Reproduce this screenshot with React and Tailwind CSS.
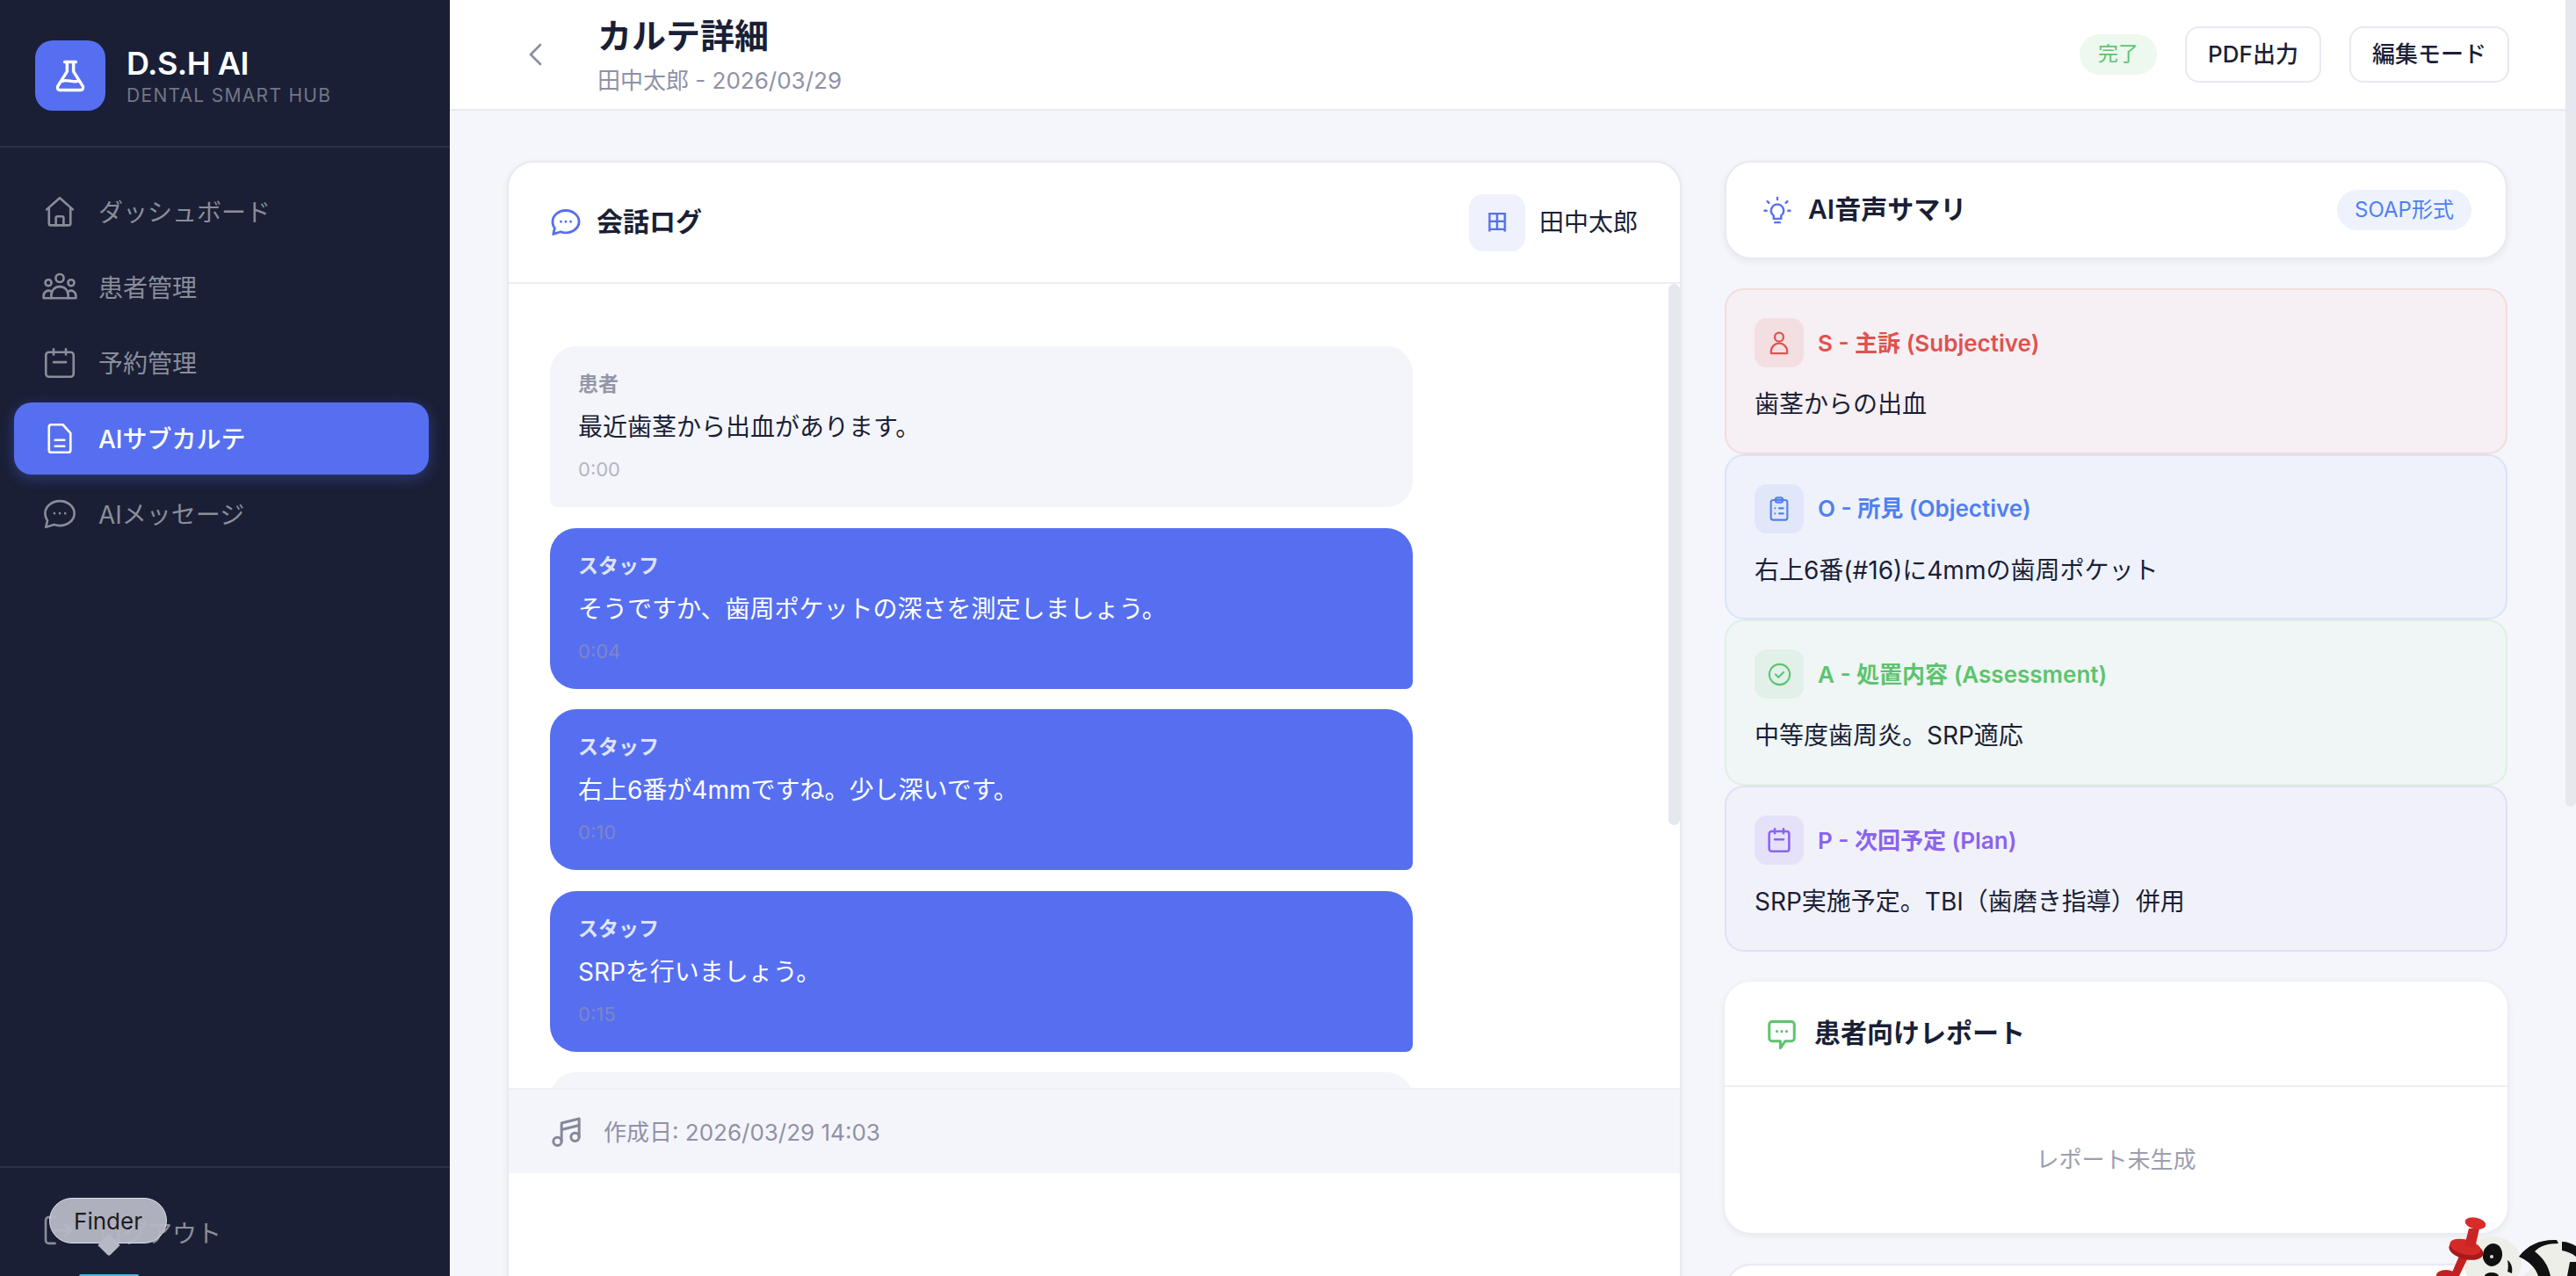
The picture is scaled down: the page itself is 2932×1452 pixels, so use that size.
import React from "react";

const Ico = ({ className = "", sw = 1.5, children }) => (
  <svg
    viewBox="0 0 24 24"
    fill="none"
    stroke="currentColor"
    strokeWidth={sw}
    strokeLinecap="round"
    strokeLinejoin="round"
    className={className}
  >
    {children}
  </svg>
);

const HomeIcon = (p) => (
  <Ico {...p}>
    <path d="M3.500 10.500 12 3l8.500 7.500" />
    <path d="M5 9.500V19.500a1.300 1.300 0 0 0 1.300 1.300h11.400a1.300 1.300 0 0 0 1.300-1.300V9.500" />
    <path d="M9.500 20.800v-4.800a1 1 0 0 1 1-1h3a1 1 0 0 1 1 1v4.800" />
  </Ico>
);
const TeamIcon = (p) => (
  <Ico {...p}>
    <circle cx="12" cy="6" r="2.600" />
    <circle cx="4.600" cy="9" r="2" />
    <circle cx="19.400" cy="9" r="2" />
    <path d="M6.500 19v-2a5.500 5.500 0 0 1 11 0v2z" />
    <path d="M6.500 19H1.500v-1.500a3.300 3.300 0 0 1 4.800-3" />
    <path d="M17.500 19h5v-1.500a3.300 3.300 0 0 0-4.800-3" />
  </Ico>
);
const CalIcon = (p) => (
  <Ico {...p}>
    <rect x="3" y="5" width="18" height="16" rx="2" />
    <path d="M8 3v3.500M16 3v3.500M8 11.500h8" />
  </Ico>
);
const FileIcon = (p) => (
  <Ico {...p}>
    <path d="M6.500 3h7.500l5 5.500V19.500a1.500 1.500 0 0 1-1.500 1.500h-11A1.500 1.500 0 0 1 5 19.500v-15A1.500 1.500 0 0 1 6.500 3z" />
    <path d="M9 13h6M9 17h6" />
  </Ico>
);
const ChatIcon = (p) => (
  <Ico {...p}>
    <path d="M12 3.500c5.200 0 9.500 3.600 9.500 8s-4.300 8-9.500 8c-1.400 0-2.500-.2-3.700-.7L3 20.500l1-4.300c-1-1.300-1.500-2.900-1.500-4.700 0-4.400 4.300-8 9.500-8z" />
    <path d="M8.500 11.500h.01M12 11.500h.01M15.500 11.500h.01" />
  </Ico>
);
const LogoutIcon = (p) => (
  <Ico {...p}>
    <path d="M10 3.500H6a2 2 0 0 0-2 2v13a2 2 0 0 0 2 2h4" />
    <path d="M10 12h10M16.500 8l4 4-4 4" />
  </Ico>
);

const navItems = [
  { label: "ダッシュボード", Icon: HomeIcon },
  { label: "患者管理", Icon: TeamIcon },
  { label: "予約管理", Icon: CalIcon },
  { label: "AIサブカルテ", Icon: FileIcon, active: true },
  { label: "AIメッセージ", Icon: ChatIcon },
];

const messages = [
  { who: "患者", text: "最近歯茎から出血があります。", time: "0:00" },
  { who: "スタッフ", text: "そうですか、歯周ポケットの深さを測定しましょう。", time: "0:04", staff: true },
  { who: "スタッフ", text: "右上6番が4mmですね。少し深いです。", time: "0:10", staff: true },
  { who: "スタッフ", text: "SRPを行いましょう。", time: "0:15", staff: true },
];

const soap = [
  {
    title: "S - 主訴 (Subjective)",
    body: "歯茎からの出血",
    box: "bg-[#f6eff3] border-[#f3dcdd]",
    chip: "bg-[#f3dfe2]",
    tint: "text-[#e0524f]",
    icon: (
      <Ico className="h-[34px] w-[34px]" sw={1.6}>
        <circle cx="12" cy="7.500" r="3.500" />
        <path d="M5.500 20.500v-1.500a5.500 5.500 0 0 1 13 0v1.500z" />
      </Ico>
    ),
  },
  {
    title: "O - 所見 (Objective)",
    body: "右上6番(#16)に4mmの歯周ポケット",
    box: "bg-[#eff2fb] border-[#d9e3f8]",
    chip: "bg-[#e1e7f8]",
    tint: "text-[#4f80f0]",
    icon: (
      <Ico className="h-[32px] w-[32px]" sw={1.6}>
        <rect x="5" y="4.500" width="14" height="17" rx="2" />
        <rect x="9" y="2.500" width="6" height="4" rx="1.500" />
        <path d="M8.500 11.500h.01M8.500 16h.01M12 11.500h3.500M12 16h3.500" />
      </Ico>
    ),
  },
  {
    title: "A - 処置内容 (Assessment)",
    body: "中等度歯周炎。SRP適応",
    box: "bg-[#f0f6f5] border-[#dcf0e2]",
    chip: "bg-[#e1f0e8]",
    tint: "text-[#5cc46e]",
    icon: (
      <Ico className="h-[31px] w-[31px]" sw={1.6}>
        <circle cx="12" cy="12" r="9" />
        <path d="m8.500 12 2.500 2.500 4.500-4.500" />
      </Ico>
    ),
  },
  {
    title: "P - 次回予定 (Plan)",
    body: "SRP実施予定。TBI（歯磨き指導）併用",
    box: "bg-[#f1f1fa] border-[#e1dff6]",
    chip: "bg-[#e5e1f9]",
    tint: "text-[#8b63ee]",
    icon: (
      <Ico className="h-[34px] w-[34px]" sw={1.8}>
        <rect x="4" y="5" width="16" height="16" rx="2" />
        <path d="M8.500 3v3.500M15.500 3v3.500M8.500 11.500h7" />
      </Ico>
    ),
  },
];

// the pinned panda poking in at the corner of the desktop
const PandaSticker = () => (
  <svg viewBox="0 0 192 112" className="absolute bottom-0 right-0 h-[112px] w-[192px]">
    <ellipse cx="97" cy="97" rx="33" ry="30" fill="#eeeee8" />
    <ellipse cx="97" cy="88" rx="11" ry="13" fill="#111" transform="rotate(12 97 88)" />
    <circle cx="96" cy="90" r="2" fill="#ddd" />
    <path d="M114 94c5 3 6 10 5 15l-5-2c1-4 1-8 0-13z" fill="#111" />
    <ellipse cx="96" cy="112" rx="8" ry="4" fill="#111" />
    <path d="M128 92c8-14 25-22 41-21 9 0 16 2 23 5v36h-60c7-7 13-12 18-15-6-4-14-5-22-5z" fill="#eeeee8" />
    <path d="M127 90c10-14 26-20 43-19l2 4c-13 0-21 3-27 9 10 8 15 15 18 28h-14c-3-9-9-16-22-22z" fill="#111" />
    <path d="M176 73c6 0 11 2 16 5v12c-5-4-10-6-16-7z" fill="#111" />
    <path d="M185 96h7v16h-10z" fill="#111" />
    <path d="M61 85 49 112h10l12-25z" fill="#c4201f" />
    <ellipse cx="44" cy="111" rx="11" ry="6" fill="#c4201f" />
    <ellipse cx="67" cy="83" rx="20" ry="10" fill="#a91a1a" transform="rotate(14 67 83)" />
    <ellipse cx="66" cy="79" rx="18" ry="8.500" fill="#d32a28" transform="rotate(14 66 79)" />
    <path d="M70 58h12l-5 22-12-2z" fill="#c92523" />
    <ellipse cx="77.500" cy="52" rx="12" ry="6.500" fill="#d92c2a" transform="rotate(12 77.500 52)" />
  </svg>
);

const App = () => {
  return (
    <div className="relative flex h-[1452px] w-full overflow-hidden bg-[#f4f6fb] text-[#1a1f36] [font-family:Inter,'Noto_Sans_CJK_JP',sans-serif]">
      {/* Sidebar */}
      <aside className="flex w-[512px] shrink-0 flex-col bg-[#1a1f36]">
        <div className="flex h-[168px] items-start gap-[24px] border-b-2 border-[#2b3046] pl-[40px] pt-[46px]">
          <div className="flex h-[80px] w-[80px] items-center justify-center rounded-[20px] bg-[#566ff0] text-white">
            <svg viewBox="0 0 24 24" fill="none" stroke="currentColor" strokeWidth="1.900" strokeLinejoin="round" strokeLinecap="round" className="h-[44px] w-[44px]">
              <path d="M8.500 3.500h7M10 3.500v6L4.300 18.500c-.7 1.200 0 2.500 1.400 2.500h12.600c1.400 0 2.100-1.300 1.400-2.500L14 9.500v-6" />
              <path d="M7 15.500c3-1.500 6 1 10 0" />
            </svg>
          </div>
          <div className="pt-[4px]">
            <div className="text-[36px] leading-[44px] font-semibold tracking-[-0.5px] text-white">D.S.H AI</div>
            <div className="mt-[2px] text-[21px] leading-[26px] tracking-[1.300px] text-[#737684]">DENTAL SMART HUB</div>
          </div>
        </div>

        <nav className="flex flex-1 flex-col gap-[4px] pl-[16px] pr-[24px] pt-[32px]">
          {navItems.map(({ label, Icon, active }) => (
            <div
              key={label}
              className={`flex h-[82px] items-center gap-[23px] rounded-[20px] pl-[31px] text-[28px] ${
                active ? "bg-[#566ff0] font-medium text-white shadow-[0_4px_16px_rgba(86,111,240,0.35)]" : "text-[#8a8d99]"
              }`}
            >
              <Icon className="h-[42px] w-[42px]" />
              <span className="pt-[2px]">{label}</span>
            </div>
          ))}
        </nav>

        <div className="flex h-[125px] items-start gap-[25px] border-t-2 border-[#2b3046] pl-[45px] pt-[50px] text-[28px] text-[#8a8d99]">
          <LogoutIcon className="h-[42px] w-[42px]" />
          <span className="pt-[4px] leading-[42px]">ログアウト</span>
        </div>
      </aside>

      {/* Main */}
      <main className="flex min-w-0 flex-1 flex-col">
        <header className="flex h-[126px] shrink-0 items-center justify-between border-b-2 border-[#e8e9f1] bg-white pl-[89px] pr-[64px]">
          <div className="flex items-center gap-[63px]">
            <svg viewBox="0 0 16 26" fill="none" stroke="#8a8ca0" strokeWidth="2.600" strokeLinecap="round" strokeLinejoin="round" className="h-[26px] w-[16px]">
              <path d="M14 2 3 13l11 11" />
            </svg>
            <div>
              <h1 className="text-[39px] leading-[48px] font-semibold">カルテ詳細</h1>
              <p className="mt-[11px] text-[26px] leading-[32px] text-[#8f91a6]">田中太郎 - 2026/03/29</p>
            </div>
          </div>
          <div className="flex items-center">
            <span className="mr-[32px] flex h-[46px] w-[88px] items-center justify-center rounded-full bg-[#edf8ee] pb-[2px] text-[23px] text-[#5cc46e]">完了</span>
            <button className="mr-[32px] h-[64px] w-[155px] rounded-[16px] border-2 border-[#e8e9f1] bg-white pb-[2px] text-[26px] font-medium">PDF出力</button>
            <button className="h-[64px] w-[182px] rounded-[16px] border-2 border-[#e8e9f1] bg-white pb-[2px] text-[26px] font-medium">編集モード</button>
          </div>
        </header>

        <div className="grid flex-1 grid-cols-[1337px_891px] gap-[49px] pl-[65px] pt-[57px]">
          {/* Conversation log */}
          <section className="flex flex-col rounded-t-[30px] border-x-2 border-t-2 border-[#e8e9f1] bg-white shadow-[0_2px_8px_rgba(26,31,54,0.05)]">
            <div className="flex h-[138px] shrink-0 items-center justify-between border-b-2 border-[#eeeff5] pl-[46px] pr-[48px]">
              <div className="flex items-center gap-[16px]">
                <ChatIcon className="h-[38px] w-[38px] text-[#566ff0]" sw={1.8} />
                <h2 className="pb-[1px] text-[30px] font-semibold">会話ログ</h2>
              </div>
              <div className="flex items-center gap-[16px]">
                <span className="flex h-[65px] w-[64px] items-center justify-center rounded-[16px] bg-[#eff1fd] text-[24px] font-medium text-[#566ff0]">田</span>
                <span className="text-[28px]">田中太郎</span>
              </div>
            </div>

            <div className="flex h-[915px] shrink-0 overflow-hidden">
              <div className="flex flex-1 flex-col gap-[23.500px] pl-[47px] pt-[71px]">
                {messages.map((m) => (
                  <div
                    key={m.time}
                    className={`w-[982px] shrink-0 pb-[30px] pl-[32px] pt-[29px] ${
                      m.staff ? "rounded-[30px] rounded-br-[8px] bg-[#566ff0] text-white" : "rounded-[30px] rounded-bl-[8px] bg-[#f4f5fa]"
                    }`}
                  >
                    <div className={`text-[23px] leading-[28px] font-semibold ${m.staff ? "text-[#dfe3fd]" : "text-[#9496a8]"}`}>{m.who}</div>
                    <div className="mt-[13px] text-[28px] leading-[44px]">{m.text}</div>
                    <div className={`mt-[13px] text-[22px] leading-[26px] ${m.staff ? "text-[#7f86c6]" : "text-[#b4b5c3]"}`}>{m.time}</div>
                  </div>
                ))}
                <div className="h-[183px] w-[982px] shrink-0 rounded-[30px] bg-[#f4f5fa]" />
              </div>
              <div className="w-[13px] shrink-0">
                <div className="h-[616px] rounded-full bg-[#e6e8f0]" />
              </div>
            </div>

            <div className="flex h-[97px] shrink-0 items-center gap-[22px] border-t-2 border-[#eef0f6] bg-[#f4f5fa] pl-[46px] text-[26px] text-[#8f91a6]">
              <svg viewBox="0 0 24 24" fill="none" stroke="#85889a" strokeWidth="1.800" strokeLinecap="round" strokeLinejoin="round" className="h-[40px] w-[40px]">
                <path d="M8.500 18.500V6l12-3v12.500" />
                <path d="M8.500 10.500l12-3" />
                <circle cx="5.700" cy="18.500" r="2.800" />
                <circle cx="17.700" cy="15.500" r="2.800" />
              </svg>
              <span className="pt-[2px]">作成日: 2026/03/29 14:03</span>
            </div>
          </section>

          {/* AI summary */}
          <div className="flex flex-col">
            <div className="flex h-[112px] items-center justify-between rounded-[30px] border-2 border-[#e8e9f1] bg-white pl-[41px] pr-[39px] shadow-[0_3px_8px_rgba(26,31,54,0.06)]">
              <div className="flex items-center gap-[18px]">
                <svg viewBox="0 0 24 24" fill="none" stroke="#566ff0" strokeWidth="1.700" strokeLinecap="round" strokeLinejoin="round" className="h-[34px] w-[34px]">
                  <path d="M12 7.500a5 5 0 0 0-3 9v2.500h6v-2.500a5 5 0 0 0-3-9z" />
                  <path d="M10 22h4M12 2v1.500M4 5l1.200 1.200M20 5l-1.200 1.200M1.800 12.500h1.500M20.700 12.500h1.500" />
                </svg>
                <h2 className="pb-[2px] text-[30px] font-semibold">AI音声サマリ</h2>
              </div>
              <span className="flex h-[46px] w-[153px] items-center justify-center rounded-full bg-[#edf2fd] pb-[1px] text-[24px] text-[#5080f0]">SOAP形式</span>
            </div>

            <div className="mt-[33px] flex flex-col">
              {soap.map((s) => (
                <div key={s.title} className={`h-[188.700px] rounded-[22px] border-2 pl-[32px] pt-[32px] ${s.box}`}>
                  <div className={`flex items-center gap-[16px] ${s.tint}`}>
                    <span className={`flex h-[56px] w-[56px] items-center justify-center rounded-[14px] ${s.chip}`}>{s.icon}</span>
                    <span className="text-[26px] font-semibold">{s.title}</span>
                  </div>
                  <p className="mt-[22px] text-[28px] leading-[40px]">{s.body}</p>
                </div>
              ))}
            </div>

            <div className="mt-[34px] rounded-[30px] bg-white shadow-[0_2px_8px_rgba(26,31,54,0.08)]">
              <div className="flex h-[120px] items-center gap-[18px] border-b-2 border-[#eeeff5] pl-[46px]">
                <svg viewBox="0 0 24 24" fill="none" stroke="#5cc46e" strokeWidth="1.900" strokeLinecap="round" strokeLinejoin="round" className="h-[38px] w-[38px]">
                  <path d="M5 3.500h14a2 2 0 0 1 2 2v10a2 2 0 0 1-2 2h-4.500L11 22.500v-5H5a2 2 0 0 1-2-2v-10a2 2 0 0 1 2-2z" />
                  <path d="M8.500 10.500h.01M12 10.500h.01M15.500 10.500h.01" />
                </svg>
                <h2 className="text-[30px] font-semibold">患者向けレポート</h2>
              </div>
              <div className="flex h-[166px] items-center justify-center text-[26px] text-[#9c9eb0]">レポート未生成</div>
            </div>

            <div className="mt-[35px] h-[60px] rounded-t-[30px] border-x-2 border-t-2 border-[#e8e9f1] bg-white" />
          </div>
        </div>
      </main>

      {/* Page scrollbar */}
      <div className="w-[12px] shrink-0 bg-[#f4f6fb]">
        <div className="h-[918px] rounded-b-full bg-[#e6e8f0]" />
      </div>

      {/* Desktop overlays: Finder tooltip and sticker */}
      <div className="absolute left-[56px] top-[1363px] flex h-[52px] w-[134px] items-center justify-center rounded-[26px] border border-[#dcdde6] bg-[#b6b8c6]/95 text-[26px] text-[#1c1c22] [font-family:Inter,sans-serif]">
        Finder
        <div className="absolute left-[58px] top-[44px] h-[18px] w-[18px] rotate-45 rounded-br-[3px] bg-[#b6b8c6]" />
      </div>
      <div className="absolute bottom-0 left-[90px] h-[2px] w-[68px] rounded-t-full bg-[#4fb4e2]" />
      <PandaSticker />
    </div>
  );
};

export default App;
